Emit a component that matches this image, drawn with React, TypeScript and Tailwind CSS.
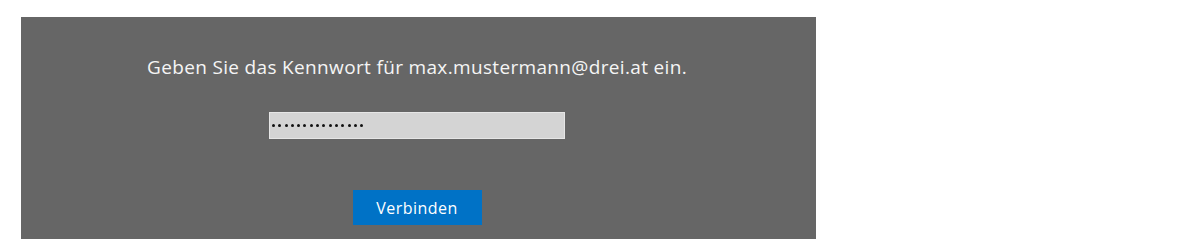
export default function App() {
  const dots = Array.from({ length: 15 });
  return (
    <div className="w-[1200px] h-[250px] bg-white pt-[17px] pl-[21px]" style={{ fontFamily: '"Open Sans", "Noto Sans", sans-serif' }}>
      <div className="w-[795px] h-[222px] bg-[#666666] flex flex-col items-center pt-[38px] pr-[3px]">
        <div className="text-[19px] leading-[24px] text-[#f5f5f5] tracking-[0.34px]">
          Geben Sie das Kennwort für max.mustermann@drei.at ein.
        </div>
        <div className="mt-[33px] w-[296px] h-[27px] bg-[#d4d4d4] border border-[#e6e6e6] flex items-center pl-[2px] gap-[3.3px]">
          {dots.map((_, i) => (
            <span key={i} className="block w-[3px] h-[3px] rounded-full bg-[#111111]" />
          ))}
        </div>
        <button className="mt-[51px] w-[129px] h-[35px] bg-[#0072c6] text-white text-[16px] tracking-[0.45px] leading-[20px] flex items-center justify-center pt-[1px]">
          Verbinden
        </button>
      </div>
    </div>
  );
}
